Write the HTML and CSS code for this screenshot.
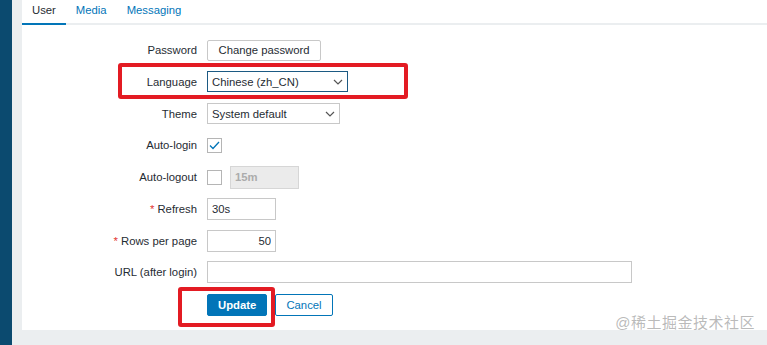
FILE: index.html
```html
<!DOCTYPE html>
<html lang="en">

<head>
    <meta charset="UTF-8">
    <title>User settings</title>
    <link rel="stylesheet" href="styles.css">
</head>

<body>
    <div class="sidebar"></div>
    <div class="main">
        <div class="panel">
            <div class="tabs">
                <span class="tab active">User</span>
                <span class="tab">Media</span>
                <span class="tab">Messaging</span>
            </div>

            <div class="form">
                <label class="label">Password</label>
                <div class="field"><button class="btn-alt">Change password</button></div>

                <label class="label">Language</label>
                <div class="field">
                    <div class="select focus lang">
                        <span>Chinese (zh_CN)</span>
                        <svg width="10" height="6" viewBox="0 0 10 6"><path d="M1 1l4 4 4-4" fill="none" stroke="#555" stroke-width="1.2"/></svg>
                    </div>
                    <div class="mark mark-lang"></div>
                </div>

                <label class="label">Theme</label>
                <div class="field">
                    <div class="select theme">
                        <span>System default</span>
                        <svg width="10" height="6" viewBox="0 0 10 6"><path d="M1 1l4 4 4-4" fill="none" stroke="#555" stroke-width="1.2"/></svg>
                    </div>
                </div>

                <label class="label">Auto-login</label>
                <div class="field">
                    <span class="check">
                        <svg width="11" height="9" viewBox="0 0 11 9"><path d="M1 4.5l3 3 6-6.5" fill="none" stroke="#0275b8" stroke-width="1.3"/></svg>
                    </span>
                </div>

                <label class="label">Auto-logout</label>
                <div class="field">
                    <span class="check"></span>
                    <input class="input disabled" type="text" value="15m" disabled>
                </div>

                <label class="label"><i class="req">*</i> Refresh</label>
                <div class="field"><input class="input short" type="text" value="30s"></div>

                <label class="label"><i class="req">*</i> Rows per page</label>
                <div class="field"><input class="input short num" type="text" value="50"></div>

                <label class="label">URL (after login)</label>
                <div class="field"><input class="input url" type="text"></div>

                <div></div>
                <div class="field buttons">
                    <button class="btn">Update</button>
                    <button class="btn-alt blue">Cancel</button>
                    <div class="mark mark-update"></div>
                </div>
            </div>

            <div class="watermark">@稀土掘金技术社区</div>
        </div>
    </div>
</body>

</html>
```

FILE: styles.css
```css
* {
    box-sizing: border-box;
}

body {
    margin: 0;
    height: 345px;
    display: flex;
    background-color: #ebeef0;
    font-family: "Liberation Sans", Arial, "Noto Sans CJK SC", sans-serif;
    font-size: 11.3px;
    color: #1f2c33;
    overflow: hidden;
}

.sidebar {
    width: 12px;
    flex-shrink: 0;
    background-color: #0b4a6f;
}

.main {
    flex: 1;
    padding-left: 10px;
}

.panel {
    position: relative;
    height: 330px;
    background-color: #ffffff;
}

.tabs {
    display: flex;
    height: 25px;
    border-bottom: 2px solid #ebeef0;
}

.tab {
    padding: 3px 10px 0;
    color: #0275b8;
    line-height: 14px;
}

.tab.active {
    color: #1f2c33;
    border-bottom: 2px solid #0275b8;
    margin-bottom: -2px;
}

.form {
    display: grid;
    grid-template-columns: 175px 1fr;
    grid-auto-rows: 22px;
    column-gap: 10px;
    row-gap: 9.75px;
    margin-top: 14px;
}

.label {
    text-align: right;
    line-height: 22px;
}

.req {
    font-style: normal;
    color: #e33734;
}

.field {
    position: relative;
    display: flex;
    align-items: center;
    gap: 8px;
}

button {
    font-family: inherit;
    font-size: 11.3px;
    height: 21px;
    padding: 0 10px;
    border-radius: 2px;
    cursor: pointer;
}

.btn-alt {
    background-color: #ffffff;
    border: 1px solid #c8c8c8;
    color: #1f2c33;
    width: 114px;
}

.btn-alt.blue {
    border-color: #0275b8;
    color: #0275b8;
    width: 58px;
    height: 22px;
}

.btn {
    background-color: #0275b8;
    border: 1px solid #0275b8;
    color: #ffffff;
    font-weight: bold;
    width: 60px;
    height: 22px;
}

.buttons {
    margin-top: 1px;
}

.select {
    display: flex;
    align-items: center;
    justify-content: space-between;
    height: 21px;
    padding: 0 4px 0 4px;
    border: 1px solid #c8c8c8;
    background-color: #ffffff;
}

.select.focus {
    border-color: #1c5a83;
}

.lang {
    width: 141px;
}

.theme {
    width: 133px;
}

.check {
    display: flex;
    align-items: center;
    justify-content: center;
    width: 15px;
    height: 15px;
    border: 1px solid #b5b5b5;
    background-color: #ffffff;
}

.input {
    font-family: inherit;
    font-size: 11.3px;
    color: #1f2c33;
    height: 22px;
    padding: 0 4px;
    border: 1px solid #c8c8c8;
    background-color: #ffffff;
    outline: none;
}

.input.disabled {
    width: 69px;
    height: 23px;
    background-color: #ebebeb;
    border-color: #d6d6d6;
    color: #acacac;
    font-weight: bold;
}

.short {
    width: 69px;
}

.num {
    text-align: right;
}

.url {
    width: 425px;
}

/* red annotation boxes from the screenshot */
.mark {
    position: absolute;
    border: 4px solid #e31b23;
    border-radius: 3px;
    pointer-events: none;
}

.mark-lang {
    left: -89px;
    top: -8px;
    width: 290px;
    height: 36px;
}

.mark-update {
    left: -29px;
    top: -7px;
    width: 97px;
    height: 40px;
}

.watermark {
    position: absolute;
    right: 12px;
    bottom: -2px;
    font-size: 15px;
    color: rgba(140, 140, 140, 0.6);
    letter-spacing: 0.5px;
}
```
